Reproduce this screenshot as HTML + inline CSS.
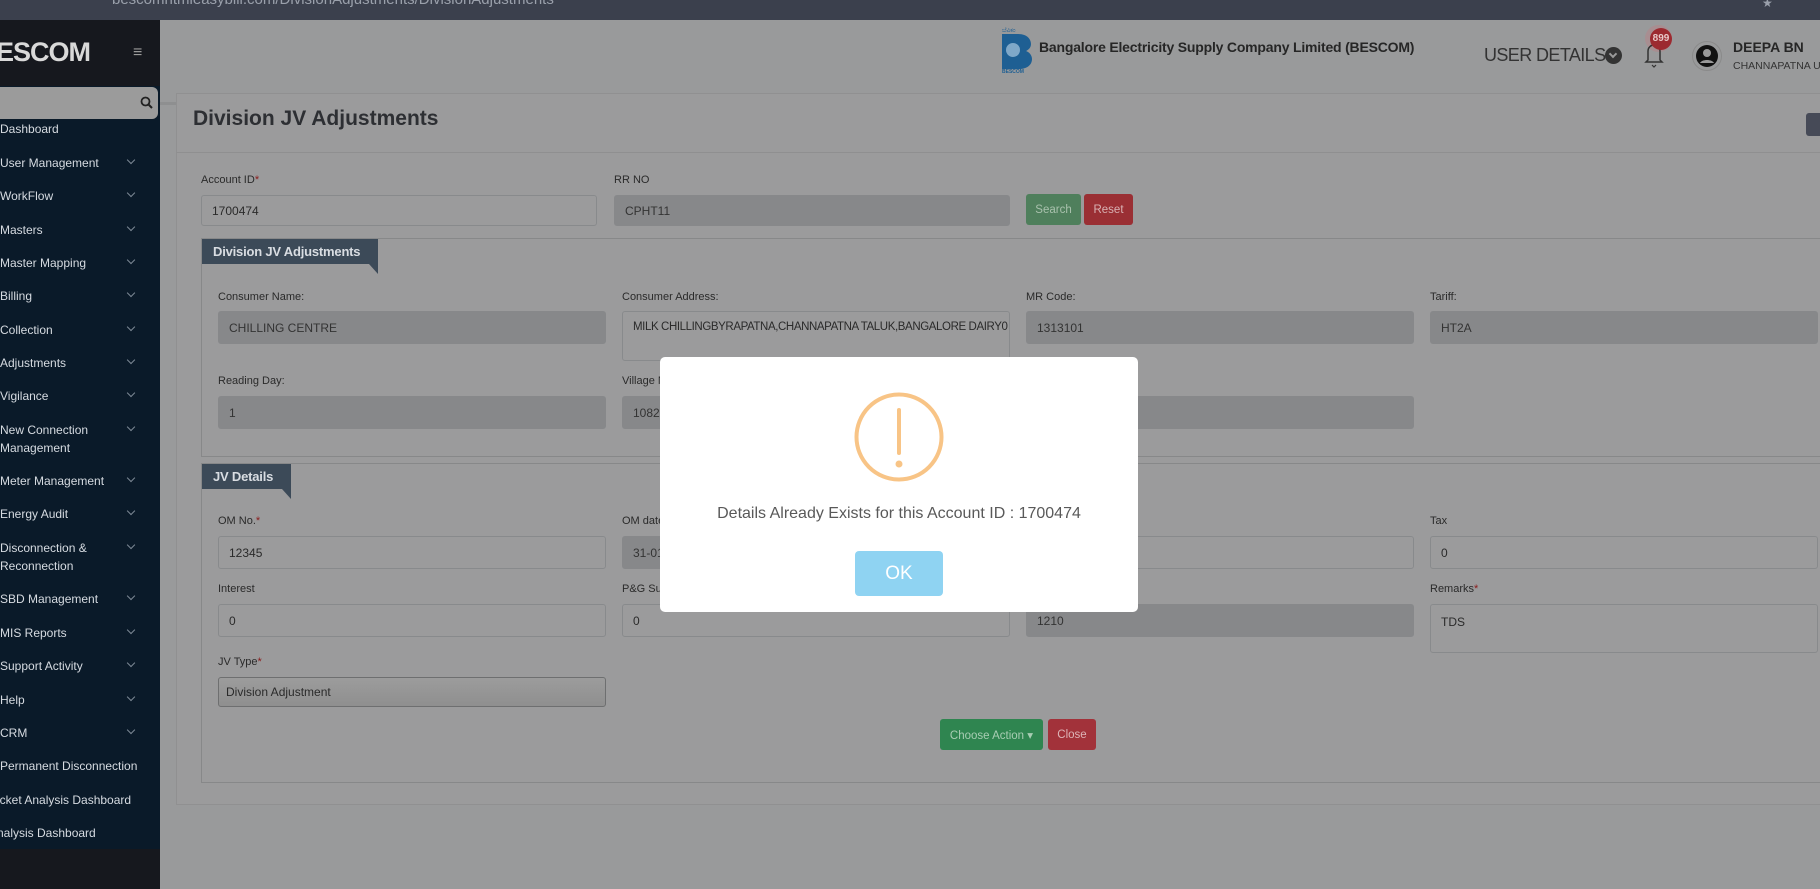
<!DOCTYPE html>
<html><head><meta charset="utf-8"><style>
*{box-sizing:border-box;margin:0;padding:0}
body{width:1820px;height:889px;overflow:hidden;position:relative;background:#999a9b;font-family:"Liberation Sans",Arial,sans-serif;color:#222}
.a{position:absolute}
.top{left:0;top:0;width:1820px;height:20px;background:#3b404d;overflow:hidden}
.side{left:0;top:20px;width:160px;height:869px;background:#0a1a29}
.mi{position:absolute;left:0;font-size:12px;color:#d6dbe1;white-space:nowrap;line-height:18px}
.chev{position:absolute;left:128px;width:6px;height:6px;border-right:1px solid #7c8894;border-bottom:1px solid #7c8894;transform:rotate(45deg)}
.lbl{position:absolute;font-size:11px;color:#2a2a2a;white-space:nowrap}
.lbl i{color:#8b1b1b;font-style:normal}
.in{position:absolute;border:1px solid #888a8c;border-radius:3px;font-size:12px;color:#2a2a2a;padding:0 10px;display:flex;align-items:center;white-space:nowrap;overflow:hidden}
.in.f{background:#87888a;border-color:#87888a;color:#333}
.ta{align-items:flex-start;padding-top:10px}
.leg{position:absolute;background:#3c4a58;color:#d9dde2;font-weight:bold;font-size:13px;padding:0 11px;display:flex;align-items:center;white-space:nowrap;letter-spacing:-0.2px}
.leg:after{content:"";position:absolute;right:0;bottom:-10px;border-top:10px solid #3c4a58;border-left:9px solid transparent}
.btn{position:absolute;border-radius:3px;font-size:11.5px;display:flex;align-items:center;justify-content:center;white-space:nowrap}
</style></head><body>
<div class="a top"><div class="a" style="left:112px;top:-9px;font-size:15px;color:#9aa0ab;white-space:nowrap">bescomhtmleasybill.com/DivisionAdjustments/DivisionAdjustments</div><div class="a" style="left:1762px;top:-4px;color:#9aa0ab;font-size:12px">★</div></div>

<div class="a side">
 <div class="a" style="left:0;top:0;width:160px;height:66px;background:#16181e"></div>
 <div class="a" style="left:-4px;top:17px;font-size:27px;font-weight:bold;color:#d9d9d9;letter-spacing:-1px">ESCOM</div>
 <div class="a" style="left:133px;top:24px;font-size:16px;color:#9a9a9a">≡</div>
 <div class="a" style="left:0;top:67px;width:158px;height:32px;background:#9b9b9b;border-radius:0 6px 6px 0"></div>
 <svg class="a" style="left:140px;top:76px" width="13" height="13" viewBox="0 0 13 13"><circle cx="5.5" cy="5.5" r="4" fill="none" stroke="#222" stroke-width="1.8"/><path d="M8.5 8.5L12 12" stroke="#222" stroke-width="2"/></svg>
</div>
<div class="mi" style="top:120px">Dashboard</div>
<div class="mi" style="top:154px">User Management</div><div class="chev" style="top:157px"></div>
<div class="mi" style="top:187px">WorkFlow</div><div class="chev" style="top:190px"></div>
<div class="mi" style="top:221px">Masters</div><div class="chev" style="top:224px"></div>
<div class="mi" style="top:254px">Master Mapping</div><div class="chev" style="top:257px"></div>
<div class="mi" style="top:287px">Billing</div><div class="chev" style="top:290px"></div>
<div class="mi" style="top:321px">Collection</div><div class="chev" style="top:324px"></div>
<div class="mi" style="top:354px">Adjustments</div><div class="chev" style="top:357px"></div>
<div class="mi" style="top:387px">Vigilance</div><div class="chev" style="top:390px"></div>
<div class="mi" style="top:421px">New Connection<br>Management</div><div class="chev" style="top:424px"></div>
<div class="mi" style="top:472px">Meter Management</div><div class="chev" style="top:475px"></div>
<div class="mi" style="top:505px">Energy Audit</div><div class="chev" style="top:508px"></div>
<div class="mi" style="top:539px">Disconnection &amp;<br>Reconnection</div><div class="chev" style="top:542px"></div>
<div class="mi" style="top:590px">SBD Management</div><div class="chev" style="top:593px"></div>
<div class="mi" style="top:624px">MIS Reports</div><div class="chev" style="top:627px"></div>
<div class="mi" style="top:657px">Support Activity</div><div class="chev" style="top:660px"></div>
<div class="mi" style="top:691px">Help</div><div class="chev" style="top:694px"></div>
<div class="mi" style="top:724px">CRM</div><div class="chev" style="top:727px"></div>
<div class="mi" style="top:757px">Permanent Disconnection</div>
<div class="mi" style="top:791px;left:-3px">icket Analysis Dashboard</div>
<div class="mi" style="top:824px;left:-3px">nalysis Dashboard</div>
<div class="a" style="left:0;top:849px;width:160px;height:40px;background:#16181e"></div>

<!-- header -->
<div class="a" style="left:160px;top:20px;width:1660px;height:85px;background:#999a9b;border-bottom:3px solid #8e8f90"></div>
<svg class="a" style="left:1000px;top:26px" width="34" height="48" viewBox="0 0 34 48"><text x="2" y="6" font-size="6" fill="#1e5f93" font-family="Noto Sans CJK SC,sans-serif">ಬೆವಿಕಂ</text><path d="M2 8h16c10 0 13 6 13 10c0 4-3 6-5 7c3 1 6 4 6 8c0 6-5 10-13 10H2z" fill="#1e5f93"/><circle cx="13" cy="24" r="7" fill="#7fa8c8"/><text x="2" y="47" font-size="5" fill="#1e5f93" font-weight="bold">BESCOM</text></svg>
<div class="a" style="left:1039px;top:39px;font-size:14px;font-weight:bold;color:#262626;white-space:nowrap;letter-spacing:-0.2px">Bangalore Electricity Supply Company Limited (BESCOM)</div>
<div class="a" style="left:1484px;top:45px;font-size:18px;color:#333;letter-spacing:-0.6px;white-space:nowrap">USER DETAILS</div>
<div class="a" style="left:1605px;top:47px;width:17px;height:17px;border-radius:50%;background:#333"></div>
<div class="a" style="left:1610px;top:51px;width:6px;height:6px;border-right:2px solid #999;border-bottom:2px solid #999;transform:rotate(45deg)"></div>
<div class="a" style="left:1645px;top:25px;width:27px;height:27px;border-radius:50%;background:#a88e91"></div>
<svg class="a" style="left:1644px;top:40px" width="20" height="28" viewBox="0 0 20 28"><path d="M4 20V11a6 6 0 0 1 12 0v9l2 2H2z" fill="none" stroke="#333" stroke-width="1.5"/><path d="M8 25l2 2l2-2" fill="none" stroke="#333" stroke-width="1.2"/></svg>
<div class="a" style="left:1650px;top:28px;width:22px;height:22px;border-radius:50%;background:#9c2a30;color:#e8c8c8;font-size:10px;font-weight:bold;text-align:center;line-height:22px">899</div>
<div class="a" style="left:1692px;top:41px;width:30px;height:30px;border-radius:50%;border:1px solid #8a8a8a"></div>
<svg class="a" style="left:1695px;top:44px" width="24" height="24" viewBox="0 0 24 24"><circle cx="12" cy="12" r="11" fill="#111"/><circle cx="12" cy="9" r="4" fill="#999"/><path d="M5 19c2-4 12-4 14 0" fill="#999"/></svg>
<div class="a" style="left:1733px;top:39px;font-size:14px;font-weight:bold;color:#262626">DEEPA BN</div>
<div class="a" style="left:1733px;top:60px;font-size:10.5px;color:#333;white-space:nowrap">CHANNAPATNA U</div>

<!-- card -->
<div class="a" style="left:176px;top:93px;width:1660px;height:712px;background:#9b9b9c;border:1px solid #909091"></div>
<div class="a" style="left:176px;top:152px;width:1660px;height:1px;background:#8f8f90"></div>
<div class="a" style="left:193px;top:107px;font-size:21px;font-weight:bold;color:#2d2f33">Division JV Adjustments</div>
<div class="a" style="left:1806px;top:113px;width:20px;height:23px;background:#464a57;border-radius:3px"></div>

<div class="lbl" style="left:201px;top:174px">Account ID<i>*</i></div>
<div class="in" style="left:201px;top:195px;width:396px;height:31px">1700474</div>
<div class="lbl" style="left:614px;top:174px">RR NO</div>
<div class="in f" style="left:614px;top:195px;width:396px;height:31px">CPHT11</div>
<div class="btn" style="left:1026px;top:194px;width:55px;height:31px;background:#4f7f5c;color:#a9c1ad">Search</div>
<div class="btn" style="left:1084px;top:194px;width:49px;height:31px;background:#9a2f34;color:#d9b2b4">Reset</div>

<div class="a" style="left:201px;top:238px;width:1640px;height:219px;border:1px solid #878889"></div>
<div class="leg" style="left:202px;top:239px;width:176px;height:25px">Division JV Adjustments</div>
<div class="lbl" style="left:218px;top:291px">Consumer Name:</div>
<div class="in f" style="left:218px;top:311px;width:388px;height:33px">CHILLING CENTRE</div>
<div class="lbl" style="left:622px;top:291px">Consumer Address:</div>
<div class="in ta" style="left:622px;top:311px;width:388px;height:50px;padding-top:9px;font-size:11.5px;letter-spacing:-0.4px">MILK CHILLINGBYRAPATNA,CHANNAPATNA TALUK,BANGALORE DAIRY0</div>
<div class="lbl" style="left:1026px;top:291px">MR Code:</div>
<div class="in f" style="left:1026px;top:311px;width:388px;height:33px">1313101</div>
<div class="lbl" style="left:1430px;top:291px">Tariff:</div>
<div class="in f" style="left:1430px;top:311px;width:388px;height:33px">HT2A</div>
<div class="lbl" style="left:218px;top:375px">Reading Day:</div>
<div class="in f" style="left:218px;top:396px;width:388px;height:33px">1</div>
<div class="lbl" style="left:622px;top:375px">Village Name:</div>
<div class="in f" style="left:622px;top:396px;width:388px;height:33px">10827</div>
<div class="in f" style="left:1026px;top:396px;width:388px;height:33px"></div>

<div class="a" style="left:201px;top:463px;width:1640px;height:320px;border:1px solid #878889"></div>
<div class="leg" style="left:202px;top:464px;width:89px;height:25px">JV Details</div>
<div class="lbl" style="left:218px;top:515px">OM No.<i>*</i></div>
<div class="in" style="left:218px;top:536px;width:388px;height:33px">12345</div>
<div class="lbl" style="left:622px;top:515px">OM date</div>
<div class="in f" style="left:622px;top:536px;width:388px;height:33px">31-01-2024</div>
<div class="in" style="left:1026px;top:536px;width:388px;height:33px"></div>
<div class="lbl" style="left:1430px;top:515px">Tax</div>
<div class="in" style="left:1430px;top:536px;width:388px;height:33px">0</div>
<div class="lbl" style="left:218px;top:583px">Interest</div>
<div class="in" style="left:218px;top:604px;width:388px;height:33px">0</div>
<div class="lbl" style="left:622px;top:583px">P&amp;G Surcharge</div>
<div class="in" style="left:622px;top:604px;width:388px;height:33px">0</div>
<div class="in f" style="left:1026px;top:604px;width:388px;height:33px">1210</div>
<div class="lbl" style="left:1430px;top:583px">Remarks<i>*</i></div>
<div class="in ta" style="left:1430px;top:604px;width:388px;height:49px">TDS</div>
<div class="lbl" style="left:218px;top:656px">JV Type<i>*</i></div>
<div class="in" style="left:218px;top:677px;width:388px;height:30px;border-color:#6e6f70;background:linear-gradient(#9c9c9c,#8f8f8f);padding-left:7px">Division Adjustment</div>
<div class="btn" style="left:940px;top:719px;width:103px;height:31px;background:#2f8550;color:#a8cdb3">Choose Action ▾</div>
<div class="btn" style="left:1048px;top:719px;width:48px;height:31px;background:#a2323a;color:#ddb4b7">Close</div>

<!-- modal -->
<div class="a" style="left:660px;top:357px;width:478px;height:255px;background:#fff;border-radius:5px"></div>
<svg class="a" style="left:852px;top:390px" width="94" height="94" viewBox="0 0 94 94"><circle cx="47" cy="47" r="42.5" fill="none" stroke="#f8c486" stroke-width="4"/><path d="M47 20V63" stroke="#f8c486" stroke-width="4" stroke-linecap="round"/><circle cx="47" cy="74" r="3.5" fill="#f8c486"/></svg>
<div class="a" style="left:660px;top:505px;width:478px;text-align:center;font-size:16px;color:#595959">Details Already Exists for this Account ID : 1700474</div>
<div class="btn" style="left:855px;top:551px;width:88px;height:45px;background:#8fd3f2;color:#fff;font-size:19px;border-radius:4px">OK</div>
</body></html>
